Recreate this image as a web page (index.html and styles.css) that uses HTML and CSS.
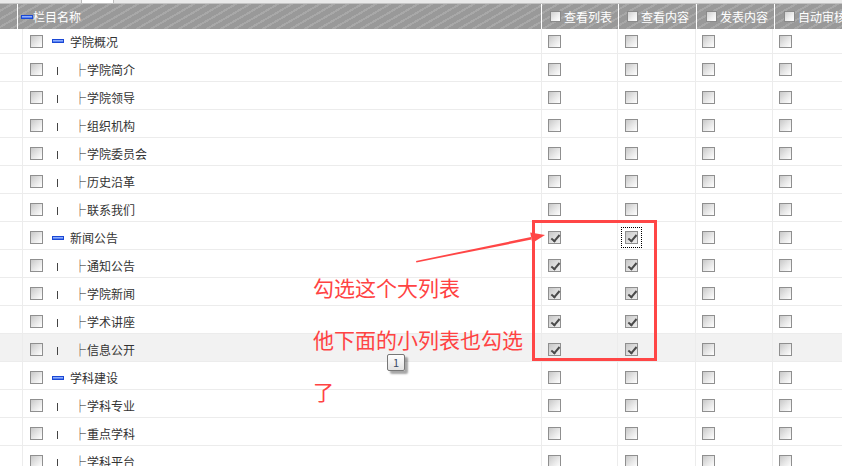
FILE: index.html
```html
<!DOCTYPE html>
<html lang="zh">
<head>
<meta charset="utf-8">
<title>栏目权限</title>
<link rel="stylesheet" href="styles.css">
</head>
<body>
<div class="page">
  <div class="topstrip"><span class="ts-a"></span><span class="ts-gap"></span><span class="ts-b"></span></div>
  <div class="head">
    <div class="hc c0"></div>
    <div class="hc c1"><span class="minus"></span><span class="htxt">栏目名称</span></div>
    <div class="hc c2"><span class="hcb"></span><span class="htxt">查看列表</span></div>
    <div class="hc c3"><span class="hcb"></span><span class="htxt">查看内容</span></div>
    <div class="hc c4"><span class="hcb"></span><span class="htxt">发表内容</span></div>
    <div class="hc c5"><span class="hcb"></span><span class="htxt">自动审核</span></div>
  </div>
  <div class="rows">
    <div class="row first">
      <div class="bc c0"></div>
      <div class="bc c1"><span class="cb"></span><span class="minus pm"></span><span class="pname">学院概况</span></div>
      <div class="bc c2"><span class="cb"></span></div><div class="bc c3"><span class="cb"></span></div><div class="bc c4"><span class="cb"></span></div><div class="bc c5"><span class="cb"></span></div>
    </div>
    <div class="row">
      <div class="bc c0"></div>
      <div class="bc c1"><span class="cb"></span><span class="pipe"></span><span class="branch">├</span><span class="cname">学院简介</span></div>
      <div class="bc c2"><span class="cb"></span></div><div class="bc c3"><span class="cb"></span></div><div class="bc c4"><span class="cb"></span></div><div class="bc c5"><span class="cb"></span></div>
    </div>
    <div class="row">
      <div class="bc c0"></div>
      <div class="bc c1"><span class="cb"></span><span class="pipe"></span><span class="branch">├</span><span class="cname">学院领导</span></div>
      <div class="bc c2"><span class="cb"></span></div><div class="bc c3"><span class="cb"></span></div><div class="bc c4"><span class="cb"></span></div><div class="bc c5"><span class="cb"></span></div>
    </div>
    <div class="row">
      <div class="bc c0"></div>
      <div class="bc c1"><span class="cb"></span><span class="pipe"></span><span class="branch">├</span><span class="cname">组织机构</span></div>
      <div class="bc c2"><span class="cb"></span></div><div class="bc c3"><span class="cb"></span></div><div class="bc c4"><span class="cb"></span></div><div class="bc c5"><span class="cb"></span></div>
    </div>
    <div class="row">
      <div class="bc c0"></div>
      <div class="bc c1"><span class="cb"></span><span class="pipe"></span><span class="branch">├</span><span class="cname">学院委员会</span></div>
      <div class="bc c2"><span class="cb"></span></div><div class="bc c3"><span class="cb"></span></div><div class="bc c4"><span class="cb"></span></div><div class="bc c5"><span class="cb"></span></div>
    </div>
    <div class="row">
      <div class="bc c0"></div>
      <div class="bc c1"><span class="cb"></span><span class="pipe"></span><span class="branch">├</span><span class="cname">历史沿革</span></div>
      <div class="bc c2"><span class="cb"></span></div><div class="bc c3"><span class="cb"></span></div><div class="bc c4"><span class="cb"></span></div><div class="bc c5"><span class="cb"></span></div>
    </div>
    <div class="row">
      <div class="bc c0"></div>
      <div class="bc c1"><span class="cb"></span><span class="pipe"></span><span class="branch">├</span><span class="cname">联系我们</span></div>
      <div class="bc c2"><span class="cb"></span></div><div class="bc c3"><span class="cb"></span></div><div class="bc c4"><span class="cb"></span></div><div class="bc c5"><span class="cb"></span></div>
    </div>
    <div class="row">
      <div class="bc c0"></div>
      <div class="bc c1"><span class="cb"></span><span class="minus pm"></span><span class="pname">新闻公告</span></div>
      <div class="bc c2"><span class="cb on"></span></div><div class="bc c3"><span class="cb on focus"></span></div><div class="bc c4"><span class="cb"></span></div><div class="bc c5"><span class="cb"></span></div>
    </div>
    <div class="row">
      <div class="bc c0"></div>
      <div class="bc c1"><span class="cb"></span><span class="pipe"></span><span class="branch">├</span><span class="cname">通知公告</span></div>
      <div class="bc c2"><span class="cb on"></span></div><div class="bc c3"><span class="cb on"></span></div><div class="bc c4"><span class="cb"></span></div><div class="bc c5"><span class="cb"></span></div>
    </div>
    <div class="row">
      <div class="bc c0"></div>
      <div class="bc c1"><span class="cb"></span><span class="pipe"></span><span class="branch">├</span><span class="cname">学院新闻</span></div>
      <div class="bc c2"><span class="cb on"></span></div><div class="bc c3"><span class="cb on"></span></div><div class="bc c4"><span class="cb"></span></div><div class="bc c5"><span class="cb"></span></div>
    </div>
    <div class="row">
      <div class="bc c0"></div>
      <div class="bc c1"><span class="cb"></span><span class="pipe"></span><span class="branch">├</span><span class="cname">学术讲座</span></div>
      <div class="bc c2"><span class="cb on"></span></div><div class="bc c3"><span class="cb on"></span></div><div class="bc c4"><span class="cb"></span></div><div class="bc c5"><span class="cb"></span></div>
    </div>
    <div class="row hl">
      <div class="bc c0"></div>
      <div class="bc c1"><span class="cb"></span><span class="pipe"></span><span class="branch">├</span><span class="cname">信息公开</span></div>
      <div class="bc c2"><span class="cb on"></span></div><div class="bc c3"><span class="cb on"></span></div><div class="bc c4"><span class="cb"></span></div><div class="bc c5"><span class="cb"></span></div>
    </div>
    <div class="row">
      <div class="bc c0"></div>
      <div class="bc c1"><span class="cb"></span><span class="minus pm"></span><span class="pname">学科建设</span></div>
      <div class="bc c2"><span class="cb"></span></div><div class="bc c3"><span class="cb"></span></div><div class="bc c4"><span class="cb"></span></div><div class="bc c5"><span class="cb"></span></div>
    </div>
    <div class="row">
      <div class="bc c0"></div>
      <div class="bc c1"><span class="cb"></span><span class="pipe"></span><span class="branch">├</span><span class="cname">学科专业</span></div>
      <div class="bc c2"><span class="cb"></span></div><div class="bc c3"><span class="cb"></span></div><div class="bc c4"><span class="cb"></span></div><div class="bc c5"><span class="cb"></span></div>
    </div>
    <div class="row">
      <div class="bc c0"></div>
      <div class="bc c1"><span class="cb"></span><span class="pipe"></span><span class="branch">├</span><span class="cname">重点学科</span></div>
      <div class="bc c2"><span class="cb"></span></div><div class="bc c3"><span class="cb"></span></div><div class="bc c4"><span class="cb"></span></div><div class="bc c5"><span class="cb"></span></div>
    </div>
    <div class="row">
      <div class="bc c0"></div>
      <div class="bc c1"><span class="cb"></span><span class="pipe"></span><span class="branch">├</span><span class="cname">学科平台</span></div>
      <div class="bc c2"><span class="cb"></span></div><div class="bc c3"><span class="cb"></span></div><div class="bc c4"><span class="cb"></span></div><div class="bc c5"><span class="cb"></span></div>
    </div>
  </div>

  <svg class="marks" width="842" height="466" viewBox="0 0 842 466">
    <rect x="533.5" y="221.5" width="122" height="138" fill="none" stroke="#ff4646" stroke-width="3"/>
    <polygon points="416,261 531,237 531.6,239.6 416.4,262.4" fill="#ff4646"/>
    <polygon points="545,235 532.3,243 530.2,232.6" fill="#ff4646"/>
  </svg>
  <div class="note"><p class="note-line">勾选这个大列表</p><p class="note-line">他下面的小列表也勾选了</p></div>
  <div class="tip">1</div>
</div>
</body>
</html>
```

FILE: styles.css
```css
html, body {
  margin: 0;
  padding: 0;
  background: #fff;
}
.page {
  position: relative;
  width: 842px;
  height: 466px;
  overflow: hidden;
  font-family: "Noto Sans CJK SC", "Noto Sans", sans-serif;
  font-size: 12px;
  color: #333;
}
.topstrip {
  height: 4px;
  display: flex;
  background: #e9e9e9;
  box-sizing: border-box;
  border-bottom: 1px solid #c4c4c4;
}
.ts-a { width: 81px; border-right: 1px solid #bdbdbd; }
.ts-gap { width: 31px; background: #fff; }
.ts-b { flex: 1; border-left: 1px solid #bdbdbd; }

.head {
  height: 25px;
  display: flex;
  background-color: #999;
  background-image: repeating-linear-gradient(150deg, #999 0px, #999 5px, #a8a8a8 5px, #a8a8a8 7px);
  color: #fff;
}
.hc {
  display: flex;
  align-items: center;
  box-sizing: border-box;
  border-right: 1px solid #fff;
  flex: none;
}
.head .c0 { width: 18px; }
.head .c1 { width: 524px; padding-left: 3px; }
.head .c2 { width: 77px; padding-left: 8px; }
.head .c3 { width: 78px; padding-left: 8px; }
.head .c4 { width: 78px; padding-left: 9px; }
.head .c5 { width: 100px; padding-left: 9px; border-right: none; }
.htxt { line-height: 14px; }
.hcb {
  width: 11px;
  height: 11px;
  box-sizing: border-box;
  border: 1px solid #8a8a8a;
  background: linear-gradient(135deg, #d0d0d0, #f0f0f0 60%, #fff);
  margin-right: 3px;
  flex: none;
}
.minus {
  display: inline-block;
  width: 12px;
  height: 4px;
  box-sizing: border-box;
  border: 1px solid #1b48d4;
  background: linear-gradient(#a9c2ff, #3f6ff0);
  flex: none;
}

.row {
  display: flex;
  height: 28px;
  box-sizing: border-box;
  padding-top: 4px;
  border-bottom: 1px solid #ececec;
  background: #fff;
}
.row.first { height: 25px; padding-top: 0; }
.row.hl { background: #f2f2f2; }
.bc {
  display: flex;
  align-items: center;
  flex: none;
  box-sizing: border-box;
  border-right: 1px solid #ececec;
  margin-top: -4px;
  padding-top: 4px;
}
.row.first .bc { margin-top: 0; padding-top: 0; }
.rows .c0 { width: 23px; }
.rows .c1 { width: 519px; padding-left: 7px; }
.rows .c2 { width: 76px; padding-left: 6px; }
.rows .c3 { width: 78px; padding-left: 7px; }
.rows .c4 { width: 77px; padding-left: 6px; }
.rows .c5 { width: 80px; padding-left: 6px; border-right: none; }

.cb {
  position: relative;
  display: inline-block;
  width: 13px;
  height: 13px;
  box-sizing: border-box;
  border: 1px solid #8f8f8f;
  background: linear-gradient(135deg, #c8c8c8, #e8e8e8 55%, #fff);
  flex: none;
}
.cb.on {
  background: linear-gradient(135deg, #c6c6c6, #e2e2e2 60%, #ececec);
}
.cb.on::after {
  content: "";
  position: absolute;
  left: 4px;
  top: 1px;
  width: 3px;
  height: 7px;
  border: solid #4a4a4a;
  border-width: 0 2px 2px 0;
  transform: rotate(40deg);
}
.cb.focus {
  outline: 1px dotted #000;
  outline-offset: 3px;
}
.pm { margin-left: 9px; }
.pname { margin-left: 6px; }
.pipe {
  display: inline-block;
  margin-left: 14px;
  width: 1px;
  height: 8px;
  margin-top: 2px;
  background: #444;
  flex: none;
}
.branch { margin-left: 16px; color: #222; }
.cname { margin-left: 1px; }

.marks {
  position: absolute;
  left: 0;
  top: 0;
  pointer-events: none;
}
.note {
  position: absolute;
  left: 313px;
  top: 261px;
  width: 218px;
  font-size: 21px;
  line-height: 52px;
  color: #ff4343;
}
.note-line { margin: 0; }
.tip {
  position: absolute;
  left: 387px;
  top: 354px;
  width: 18px;
  height: 17px;
  box-sizing: border-box;
  border: 1px solid #777;
  border-radius: 2px;
  background: linear-gradient(#fff, #e2e2e2);
  box-shadow: 3px 3px 2px rgba(0, 0, 0, 0.35);
  text-align: center;
  font-size: 11px;
  line-height: 15px;
  color: #3a4a66;
}
```
